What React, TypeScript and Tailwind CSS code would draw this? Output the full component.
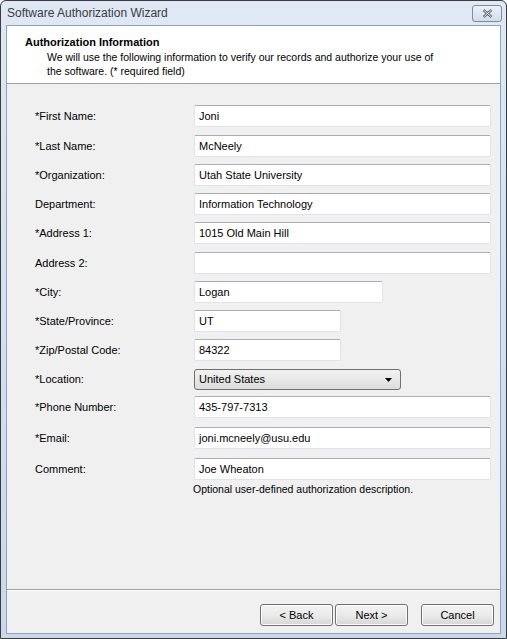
type Field = {
  label: string;
  value: string;
  width: string;
  gap: string;
  select?: boolean;
};

const FIELDS: Field[] = [
  { label: "*First Name:", value: "Joni", width: "w-[297px]", gap: "mt-[21px]" },
  { label: "*Last Name:", value: "McNeely", width: "w-[297px]", gap: "mt-[8px]" },
  { label: "*Organization:", value: "Utah State University", width: "w-[297px]", gap: "mt-[7px]" },
  { label: "Department:", value: "Information Technology", width: "w-[297px]", gap: "mt-[7px]" },
  { label: "*Address 1:", value: "1015 Old Main Hill", width: "w-[297px]", gap: "mt-[7px]" },
  { label: "Address 2:", value: "", width: "w-[297px]", gap: "mt-[8px]" },
  { label: "*City:", value: "Logan", width: "w-[189px]", gap: "mt-[7px]" },
  { label: "*State/Province:", value: "UT", width: "w-[147px]", gap: "mt-[7px]" },
  { label: "*Zip/Postal Code:", value: "84322", width: "w-[147px]", gap: "mt-[7px]" },
  { label: "*Location:", value: "United States", width: "w-[207px]", gap: "mt-[8px]", select: true },
  { label: "*Phone Number:", value: "435-797-7313", width: "w-[297px]", gap: "mt-[6px]" },
  { label: "*Email:", value: "joni.mcneely@usu.edu", width: "w-[297px]", gap: "mt-[9px]" },
  { label: "Comment:", value: "Joe Wheaton", width: "w-[297px]", gap: "mt-[9px]" },
];

function TextBox({ value, width }: { value: string; width: string }) {
  return (
    <div
      className={`${width} flex h-[22px] items-center rounded-[2px] border border-[#e2e3ea] border-t-[#abadb3] bg-white px-[4px] text-[11px] text-black`}
    >
      {value}
    </div>
  );
}

function ComboBox({ value, width }: { value: string; width: string }) {
  return (
    <div
      className={`${width} flex h-[21px] items-center justify-between rounded-[3px] border border-[#707070] bg-gradient-to-b from-[#f2f2f2] to-[#dddddd] pl-[4px] pr-[8px] text-[11px] text-black`}
    >
      <span>{value}</span>
      <svg width="7" height="4" viewBox="0 0 7 4">
        <path d="M0 0h7L3.5 4z" fill="#000" />
      </svg>
    </div>
  );
}

function Button({ label }: { label: string }) {
  return (
    <button className="flex h-[22px] w-[73px] items-center justify-center rounded-[3px] border border-[#707070] bg-gradient-to-b from-[#f2f2f2] via-[#ebebeb] to-[#d6d6d6] text-[11px] text-black shadow-[inset_0_0_0_1px_#fcfcfc]">
      {label}
    </button>
  );
}

export default function App() {
  return (
    <div className="flex h-[639px] w-[507px] flex-col rounded-t-[6px] border border-[#3c3c3c] bg-gradient-to-b from-[#dfe8f4] to-[#c9d8ec] font-['Liberation_Sans',Arial,sans-serif]">
      {/* Title bar */}
      <div className="flex h-[24px] shrink-0 items-center justify-between pl-[6px] pr-[4px]">
        <span className="text-[12px] text-[#3b3b3b]">Software Authorization Wizard</span>
        <div className="flex h-[17px] w-[30px] items-center justify-center rounded-[3px] border border-[#7b8ba1] bg-gradient-to-b from-[#eef2f8] to-[#d2dcea]">
          <svg width="11" height="9" viewBox="0 0 11 9">
            <path d="M1.5 1l8 7M9.5 1l-8 7" stroke="#5b6370" strokeWidth="2.4" />
            <path d="M1.5 1l8 7M9.5 1l-8 7" stroke="#f4f6f9" strokeWidth="0.9" />
          </svg>
        </div>
      </div>

      {/* Client area */}
      <div className="mx-[5px] mb-[4px] flex flex-1 flex-col border border-[#8fa3bd] bg-[#f0f0f0]">
        {/* Header */}
        <div className="h-[58px] shrink-0 border-b border-[#a0a0a0] bg-white pl-[18px] pt-[9px] text-black">
          <div className="text-[11px] font-bold leading-[14px]">Authorization Information</div>
          <div className="pl-[22px] pt-[1px] text-[10.5px] leading-[14px]">
            We will use the following information to verify our records and authorize your use of
            <br />
            the software. (* required field)
          </div>
        </div>

        {/* Form */}
        <div className="flex flex-col pl-[28px]">
          {FIELDS.map((f) => (
            <div key={f.label} className={`${f.gap} flex items-center`}>
              <span className="w-[159px] shrink-0 text-[11px] text-black">{f.label}</span>
              {f.select ? (
                <ComboBox value={f.value} width={f.width} />
              ) : (
                <TextBox value={f.value} width={f.width} />
              )}
            </div>
          ))}
          <div className="ml-[158px] mt-[2px] text-[10.5px] text-black">
            Optional user-defined authorization description.
          </div>
        </div>

        <div className="flex-1" />

        {/* Footer */}
        <div className="h-[44px] shrink-0 border-t border-[#a0a0a0] shadow-[inset_0_1px_0_#ffffff]">
          <div className="flex justify-end pr-[6px] pt-[14px]">
            <Button label="< Back" />
            <div className="ml-[2px]">
              <Button label="Next >" />
            </div>
            <div className="ml-[13px]">
              <Button label="Cancel" />
            </div>
          </div>
        </div>
      </div>
    </div>
  );
}
